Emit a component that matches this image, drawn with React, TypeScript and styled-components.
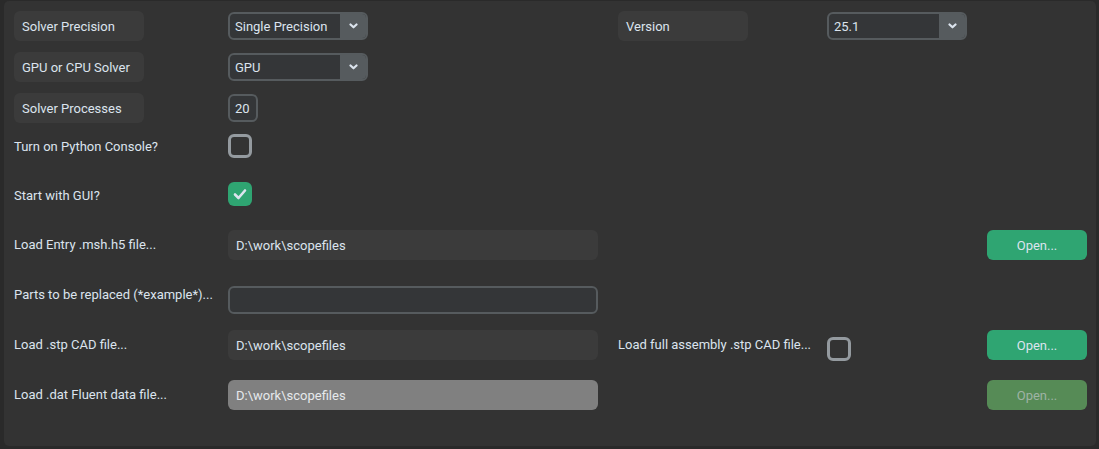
import React from "react";
import styled, { createGlobalStyle } from "styled-components";

const Global = createGlobalStyle`
  html, body { margin: 0; padding: 0; background: #2a2a2a; }
  body { font-family: Roboto, "Noto Sans", "Liberation Sans", sans-serif; }
  * { box-sizing: border-box; }
`;

const Screen = styled.div`
  width: 1099px;
  height: 449px;
  padding: 1px 3px 3px 4px;
  background: #2a2a2a;
`;

const Panel = styled.div`
  height: 445px;
  background: #333333;
  border-radius: 5px;
  padding: 10px 9px 0 10px;
  display: flex;
  flex-direction: column;
`;

const Row = styled.div<{ $mt: number; $h: number }>`
  display: grid;
  grid-template-columns: 214px 390px 209px 160px 100px;
  align-items: center;
  height: ${(p) => p.$h}px;
  margin-top: ${(p) => p.$mt}px;
`;

const BoxLabel = styled.div`
  width: 130px;
  height: 30px;
  background: #3b3b3b;
  border-radius: 6px;
  color: #dce4ee;
  font-size: 13px;
  display: flex;
  align-items: center;
  padding-left: 8px;
`;

const Text = styled.div<{ $start?: boolean; $shift?: number }>`
  color: #dce4ee;
  font-size: 13px;
  line-height: 18px;
  white-space: nowrap;
  align-self: ${(p) => (p.$start ? "start" : "center")};
  transform: translateY(${(p) => p.$shift ?? 0}px);
`;

const Combo = styled.div`
  width: 140px;
  height: 28px;
  border: 2px solid #565b5e;
  border-radius: 6px;
  background: #343638;
  display: flex;
  overflow: hidden;
`;

const ComboValue = styled.div`
  flex: 1;
  color: #dce4ee;
  font-size: 13px;
  display: flex;
  align-items: center;
  padding-left: 5px;
`;

const ComboButton = styled.div`
  width: 26px;
  background: #565b5e;
  display: flex;
  align-items: center;
  justify-content: center;
`;

const Spin = styled.div`
  width: 30px;
  height: 28px;
  border: 2px solid #565b5e;
  border-radius: 6px;
  background: #343638;
  color: #dce4ee;
  font-size: 13px;
  display: flex;
  align-items: center;
  padding-left: 5px;
`;

const Check = styled.div<{ $checked?: boolean; $offset?: number }>`
  width: 24px;
  height: 24px;
  border-radius: 6px;
  border: ${(p) => (p.$checked ? "none" : "3px solid #949a9f")};
  background: ${(p) => (p.$checked ? "#2fa572" : "transparent")};
  display: flex;
  align-items: center;
  justify-content: center;
  align-self: ${(p) => (p.$offset ? "start" : "center")};
  margin-top: ${(p) => p.$offset ?? 0}px;
`;

const Field = styled.div<{ $variant?: "plain" | "bordered" | "disabled" }>`
  width: 370px;
  height: ${(p) => (p.$variant === "bordered" ? 28 : 30)}px;
  border-radius: 6px;
  background: ${(p) =>
    p.$variant === "disabled" ? "#808080" : p.$variant === "bordered" ? "#343638" : "#3b3b3b"};
  border: ${(p) => (p.$variant === "bordered" ? "2px solid #565b5e" : "none")};
  color: ${(p) => (p.$variant === "disabled" ? "#e6e9ec" : "#dce4ee")};
  font-size: 13px;
  display: flex;
  align-items: center;
  padding-left: 8px;
`;

const Button = styled.div<{ $disabled?: boolean }>`
  width: 100px;
  height: 30px;
  border-radius: 6px;
  background: ${(p) => (p.$disabled ? "#568b56" : "#2fa572")};
  color: ${(p) => (p.$disabled ? "#9fb3a4" : "#dce4ee")};
  font-size: 13px;
  display: flex;
  align-items: center;
  justify-content: center;
`;

const Empty = styled.div``;

const Chevron = () => (
  <svg width="9" height="6" viewBox="0 0 9 6">
    <polyline points="1.5,1.5 4.5,4.3 7.5,1.5" fill="none" stroke="#dce4ee" strokeWidth="2.2" strokeLinecap="round" strokeLinejoin="round" />
  </svg>
);

const CheckMark = () => (
  <svg width="14" height="12" viewBox="0 0 14 12">
    <polyline points="2,6.5 5.5,10 12,2.5" fill="none" stroke="#dce4ee" strokeWidth="2.6" strokeLinecap="round" strokeLinejoin="round" />
  </svg>
);

const ComboBox = ({ value }: { value: string }) => (
  <Combo>
    <ComboValue>{value}</ComboValue>
    <ComboButton>
      <Chevron />
    </ComboButton>
  </Combo>
);

export default function App() {
  return (
    <>
      <Global />
      <Screen>
        <Panel>
          <Row $mt={0} $h={30}>
            <BoxLabel>Solver Precision</BoxLabel>
            <ComboBox value="Single Precision" />
            <BoxLabel>Version</BoxLabel>
            <ComboBox value="25.1" />
          </Row>
          <Row $mt={11} $h={30}>
            <BoxLabel>GPU or CPU Solver</BoxLabel>
            <ComboBox value="GPU" />
          </Row>
          <Row $mt={11} $h={30}>
            <BoxLabel>Solver Processes</BoxLabel>
            <Spin>20</Spin>
          </Row>
          <Row $mt={11} $h={24}>
            <Text $shift={1}>Turn on Python Console?</Text>
            <Check />
          </Row>
          <Row $mt={24} $h={24}>
            <Text $shift={2}>Start with GUI?</Text>
            <Check $checked>
              <CheckMark />
            </Check>
          </Row>
          <Row $mt={24} $h={30}>
            <Text>Load Entry .msh.h5 file...</Text>
            <Field>D:\work\scopefiles</Field>
            <Empty />
            <Empty />
            <Button>Open...</Button>
          </Row>
          <Row $mt={26} $h={28}>
            <Text $start>Parts to be replaced (*example*)...</Text>
            <Field $variant="bordered" />
          </Row>
          <Row $mt={15} $h={30}>
            <Text>Load .stp CAD file...</Text>
            <Field>D:\work\scopefiles</Field>
            <Text>Load full assembly .stp CAD file...</Text>
            <Check $offset={8} />
            <Button>Open...</Button>
          </Row>
          <Row $mt={21} $h={30}>
            <Text>Load .dat Fluent data file...</Text>
            <Field $variant="disabled">D:\work\scopefiles</Field>
            <Empty />
            <Empty />
            <Button $disabled>Open...</Button>
          </Row>
        </Panel>
      </Screen>
    </>
  );
}
